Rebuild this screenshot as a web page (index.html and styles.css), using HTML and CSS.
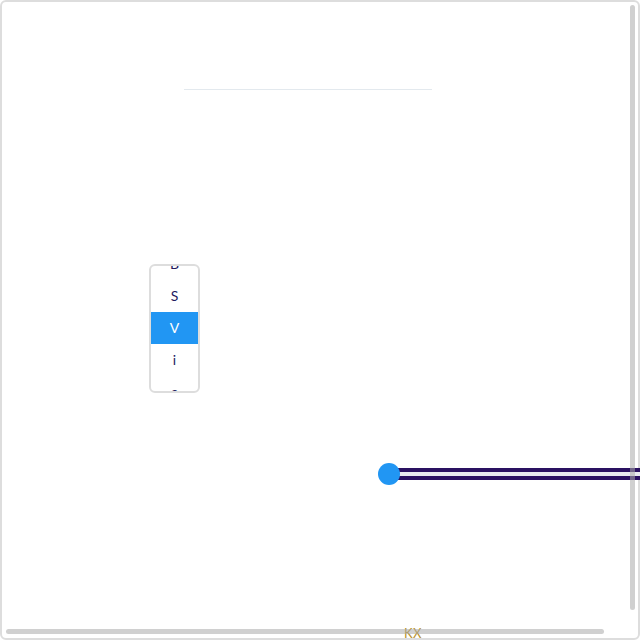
FILE: index.html
```html
<!DOCTYPE html>
<html>
<head>
<meta charset="utf-8">
<link rel="stylesheet" href="styles.css">
</head>
<body>
<div class="frame">
  <div class="rule"></div>
  <div class="listbox">
    <ul class="options">
      <li class="option">B</li>
      <li class="option">S</li>
      <li class="option selected">V</li>
      <li class="option">i</li>
      <li class="option">s</li>
    </ul>
  </div>
  <div class="slider">
    <div class="thumb"></div>
    <div class="track"></div>
  </div>
  <div class="label">KX</div>
  <div class="vbar"></div>
  <div class="hbar"></div>
</div>
</body>
</html>
```
FILE: styles.css
```css
html, body {
  margin: 0;
  padding: 0;
  background: #ffffff;
  overflow: hidden;
}
.frame {
  position: relative;
  width: 640px;
  height: 640px;
  box-sizing: border-box;
  border: 2px solid #dddddd;
  border-radius: 6px;
  font-family: Lato, "DejaVu Sans", sans-serif;
}
.rule {
  margin: 87px 0 0 182px;
  width: 248px;
  height: 1px;
  background: #e3e9ee;
}
.listbox {
  margin: 174px 0 0 147px;
  width: 51px;
  height: 129px;
  box-sizing: border-box;
  border: 2px solid #dddddd;
  border-radius: 6px;
  overflow: hidden;
}
.options {
  list-style: none;
  margin: -18px 0 0 0;
  padding: 0;
}
.option {
  height: 32px;
  line-height: 32px;
  text-align: center;
  font-size: 14px;
  color: #231a5e;
}
.option.selected {
  background: #2196f3;
  color: #ffffff;
}
.slider {
  display: flex;
  align-items: center;
  margin: 70px 0 0 376px;
  height: 22px;
}
.thumb {
  position: relative;
  z-index: 1;
  flex: none;
  width: 22px;
  height: 22px;
  border-radius: 50%;
  background: #2196f3;
}
.track {
  flex: none;
  margin-left: -11px;
  width: 280px;
  height: 12px;
  box-sizing: border-box;
  border-top: 4px solid #2a1161;
  border-bottom: 4px solid #2a1161;
  background: #e8eaee;
}
.label {
  margin: 141px 0 0 402px;
  font-size: 13px;
  line-height: 15px;
  color: #b8922c;
  letter-spacing: 0.5px;
}
.vbar {
  position: absolute;
  left: 628px;
  top: 3px;
  width: 5px;
  height: 605px;
  border-radius: 3px;
  background: rgba(170, 170, 170, 0.55);
}
.hbar {
  position: absolute;
  left: 4px;
  top: 627px;
  width: 598px;
  height: 5px;
  border-radius: 3px;
  background: rgba(170, 170, 170, 0.55);
}
```
